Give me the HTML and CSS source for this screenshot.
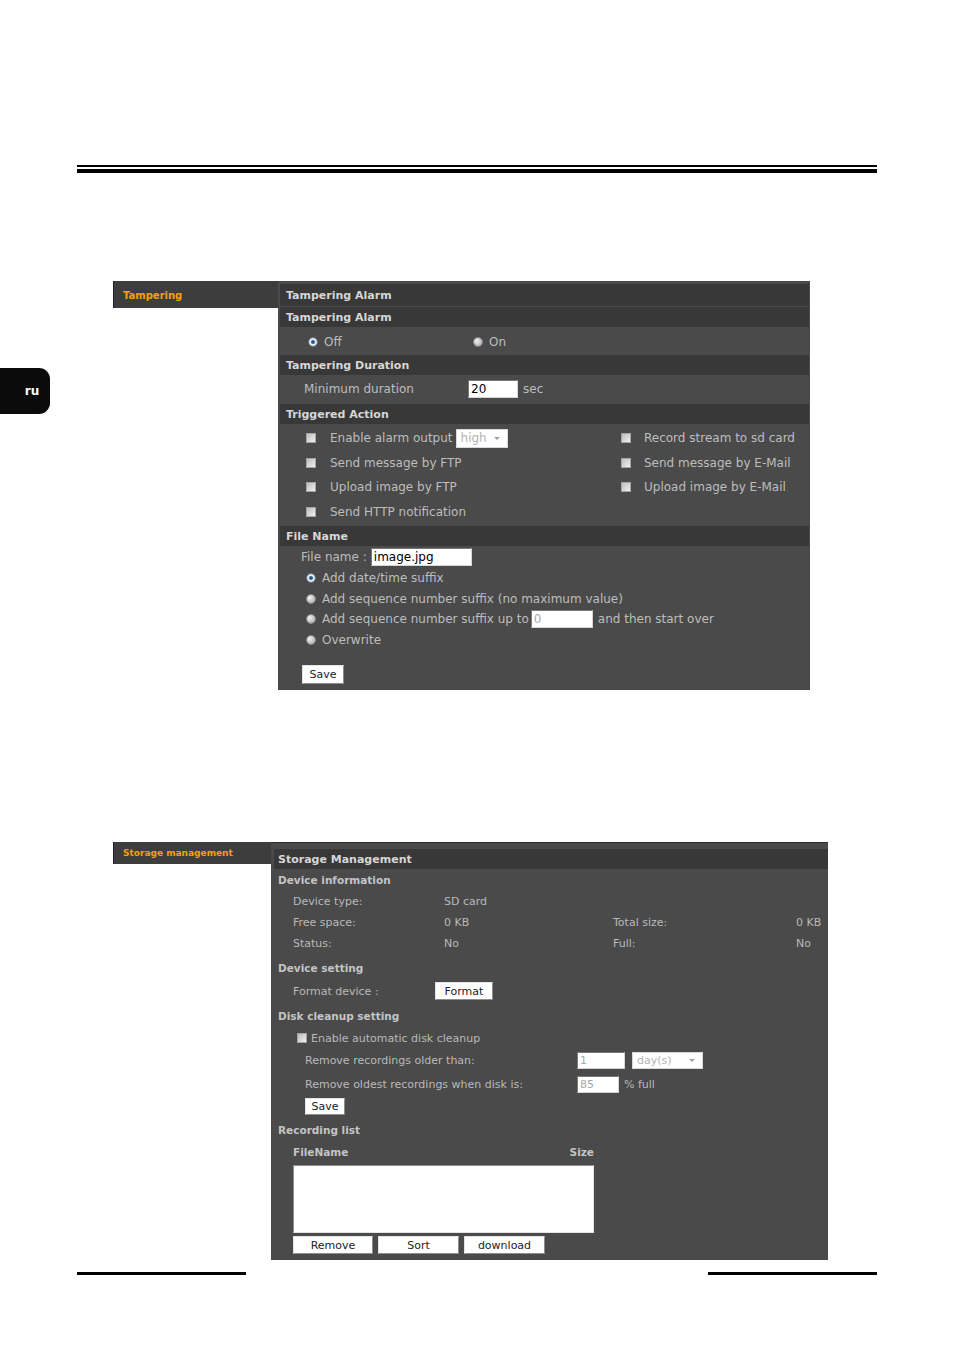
FILE: index.html
```html
<!DOCTYPE html>
<html lang="en">
<head>
    <meta charset="UTF-8">
    <meta name="viewport" content="width=device-width, initial-scale=1.0">
    <title>Tampering / Storage management</title>
    <link rel="stylesheet" href="styles.css">
</head>
<body>
<div class="page">
    <div class="rule-top">
        <div class="rule-thin"></div>
        <div class="rule-thick"></div>
    </div>

    <div class="lang-tab">ru</div>

    <!-- Tampering settings -->
    <div class="screen screen-tamper">
        <div class="side-nav"><span>Tampering</span></div>
        <div class="panel">
            <div class="panel-title">Tampering Alarm</div>

            <div class="sec-head">Tampering Alarm</div>
            <div class="row row-radio">
                <label class="opt opt-off"><input type="radio" name="alarm" checked>Off</label>
                <label class="opt"><input type="radio" name="alarm">On</label>
            </div>

            <div class="sec-head">Tampering Duration</div>
            <div class="row row-duration">
                <span class="lbl">Minimum duration</span>
                <input type="text" class="txt txt-dur" value="20">
                <span class="unit">sec</span>
            </div>

            <div class="sec-head">Triggered Action</div>
            <div class="actions">
                <label class="check"><input type="checkbox">Enable alarm output<span class="select sel-high">high<i class="caret"></i></span></label>
                <label class="check"><input type="checkbox">Record stream to sd card</label>
                <label class="check"><input type="checkbox">Send message by FTP</label>
                <label class="check"><input type="checkbox">Send message by E-Mail</label>
                <label class="check"><input type="checkbox">Upload image by FTP</label>
                <label class="check"><input type="checkbox">Upload image by E-Mail</label>
                <label class="check"><input type="checkbox">Send HTTP notification</label>
            </div>

            <div class="sec-head">File Name</div>
            <div class="file-body">
                <div class="row row-fname">
                    <span>File name :</span>
                    <input type="text" class="txt txt-fname" value="image.jpg">
                </div>
                <div class="suffixes">
                    <label class="opt"><input type="radio" name="suffix" checked>Add date/time suffix</label>
                    <label class="opt"><input type="radio" name="suffix">Add sequence number suffix (no maximum value)</label>
                    <label class="opt"><input type="radio" name="suffix">Add sequence number suffix up to<input type="text" class="txt txt-seq off" value="0"><span class="after">and then start over</span></label>
                    <label class="opt"><input type="radio" name="suffix">Overwrite</label>
                </div>
                <button class="btn btn-save">Save</button>
            </div>
        </div>
    </div>

    <!-- Storage settings -->
    <div class="screen screen-storage">
        <div class="side-nav side-nav-sm"><span>Storage management</span></div>
        <div class="panel panel-storage">
            <div class="panel-title">Storage Management</div>

            <div class="sub-head">Device information</div>
            <div class="info-grid">
                <span>Device type:</span><span>SD card</span><span></span><span></span>
                <span>Free space:</span><span>0 KB</span><span>Total size:</span><span>0 KB</span>
                <span>Status:</span><span>No</span><span>Full:</span><span>No</span>
            </div>

            <div class="sub-head gap">Device setting</div>
            <div class="srow srow-format">
                <span class="lbl">Format device :</span>
                <button class="btn btn-format">Format</button>
            </div>

            <div class="sub-head gap">Disk cleanup setting</div>
            <label class="srow srow-check"><input type="checkbox">Enable automatic disk cleanup</label>
            <div class="srow srow-clean">
                <span class="lbl">Remove recordings older than:</span>
                <input type="text" class="txt txt-days off" value="1">
                <span class="select sel-days">day(s)<i class="caret"></i></span>
            </div>
            <div class="srow srow-clean srow-full">
                <span class="lbl">Remove oldest recordings when disk is:</span>
                <input type="text" class="txt txt-pct off" value="85">
                <span class="unit">% full</span>
            </div>
            <button class="btn btn-save-sm">Save</button>

            <div class="sub-head list-gap">Recording list</div>
            <div class="list-head">
                <span>FileName</span>
                <span>Size</span>
            </div>
            <div class="listbox"></div>
            <div class="list-btns">
                <button class="btn btn-list">Remove</button>
                <button class="btn btn-list">Sort</button>
                <button class="btn btn-list">download</button>
            </div>
        </div>
    </div>

    <div class="rule-bottom">
        <div class="rule-seg"></div>
        <div class="rule-seg"></div>
    </div>
</div>
</body>
</html>
```

FILE: styles.css
```css
* {
    box-sizing: border-box;
}
body {
    margin: 0;
    background-color: #fff;
    font-family: "DejaVu Sans", Verdana, sans-serif;
}
.page {
    position: relative;
    width: 954px;
    height: 1350px;
    padding-top: 165px;
    overflow: hidden;
}

/* page rules */
.rule-top {
    margin: 0 77px;
}
.rule-thin {
    height: 2px;
    background-color: #000;
}
.rule-thick {
    height: 4px;
    margin-top: 2px;
    background-color: #000;
}
.rule-bottom {
    display: flex;
    justify-content: space-between;
    margin: 12px 77px 0;
}
.rule-seg {
    width: 169px;
    height: 3px;
    background-color: #000;
}

.lang-tab {
    position: absolute;
    left: 0;
    top: 368px;
    width: 50px;
    height: 46px;
    padding-left: 14px;
    display: flex;
    align-items: center;
    justify-content: center;
    background-color: #0b0b0b;
    border-radius: 0 11px 11px 0;
    color: #fff;
    font-weight: bold;
    font-size: 12px;
}

/* screens */
.screen {
    display: flex;
    align-items: flex-start;
    margin-left: 113px;
}
.screen-tamper {
    margin-top: 108px;
}
.screen-storage {
    margin-top: 152px;
}
.side-nav {
    width: 165px;
    height: 27px;
    padding: 2px 0 0 9px;
    background-color: #3d3d3d;
    border-left: 1px solid #1c1f45;
    color: #f5a00f;
    font-weight: bold;
    font-size: 10px;
    line-height: 26px;
}
.side-nav-sm {
    width: 158px;
    height: 22px;
    padding-top: 0;
    font-size: 9px;
    line-height: 23px;
}

.panel {
    width: 532px;
    padding: 3px 1px 6px 2px;
    background-color: #4a4a4a;
    color: #bdbdbd;
    font-size: 12px;
}
.panel-title, .sec-head {
    height: 22px;
    padding-left: 6px;
    background-color: #383838;
    color: #d6d6d6;
    font-weight: bold;
    font-size: 11px;
    line-height: 23px;
}
.sec-head {
    height: 20px;
    margin-top: 1px;
    line-height: 21px;
}

.row {
    display: flex;
    align-items: center;
}
.row-radio {
    height: 27px;
    padding: 2px 0 0 28px;
}
.opt {
    display: flex;
    align-items: center;
}
.opt-off {
    width: 165px;
}
.row-duration {
    height: 28px;
    padding-left: 24px;
}
.row-duration .lbl {
    width: 164px;
}
.unit {
    margin-left: 5px;
}

/* form controls */
input[type="radio"] {
    -webkit-appearance: none;
    appearance: none;
    width: 10px;
    height: 10px;
    margin: 0 6px 0 0;
    border-radius: 50%;
    border: 1px solid #8a8a8a;
    background: radial-gradient(circle at 35% 35%, #f4f4f4, #b5b5b5 70%);
    flex: none;
}
input[type="radio"]:checked {
    border-color: #6f7c88;
    background: #245f9a;
    box-shadow: inset 0 0 0 2px #ececec;
}
input[type="checkbox"] {
    -webkit-appearance: none;
    appearance: none;
    width: 10px;
    height: 10px;
    margin: 0 14px 0 0;
    border: 1px solid #a4a4a4;
    background: linear-gradient(135deg, #bdbdbd, #f0f0f0);
    flex: none;
}
.txt {
    height: 18px;
    padding: 0 2px;
    border: 1px solid;
    border-color: #7a7a7a #d4d4d4 #d4d4d4 #7a7a7a;
    background-color: #fff;
    color: #000;
    font-family: "DejaVu Sans", Verdana, sans-serif;
    font-size: 12px;
}
.txt.off {
    color: #a8a8a8;
}
.txt-dur {
    width: 50px;
}
.select {
    position: relative;
    display: inline-block;
    height: 19px;
    padding-left: 4px;
    background-color: #fff;
    border: 1px solid #d8d8d8;
    color: #b4b4b4;
    line-height: 17px;
}
.caret {
    position: absolute;
    right: 7px;
    top: 7px;
    border: 3px solid transparent;
    border-top: 3px solid #a0a0a0;
}
.btn {
    height: 19px;
    padding: 0;
    background-color: #fff;
    border: 1px solid;
    border-color: #e4e4e4 #8c8c8c #8c8c8c #e4e4e4;
    color: #222;
    font-family: "DejaVu Sans", Verdana, sans-serif;
    font-size: 11px;
}

/* triggered actions */
.actions {
    display: grid;
    grid-template-columns: 315px 1fr;
    grid-auto-rows: 24.5px;
    align-items: center;
    padding: 2px 0 1px 26px;
}
.check {
    display: flex;
    align-items: center;
}
.actions .check:nth-child(even) input {
    margin-right: 13px;
}
.sel-high {
    width: 52px;
    margin-left: 3px;
}

/* file name */
.row-fname {
    height: 21px;
    padding-left: 21px;
}
.txt-fname {
    width: 101px;
    margin-left: 4px;
}
.suffixes {
    margin-top: 1px;
    padding-left: 26px;
}
.suffixes .opt {
    height: 20.5px;
}
.txt-seq {
    width: 62px;
    margin-left: 2px;
}
.after {
    margin-left: 5px;
}
.btn-save {
    display: block;
    width: 42px;
    margin: 15px 0 0 22px;
}

/* storage */
.panel-storage {
    width: 557px;
    padding: 6px 0 6px 3px;
    border-top: 1px solid #2c2c2c;
    color: #b9b9b9;
    font-size: 11px;
}
.panel-storage .panel-title {
    height: 20px;
    padding-left: 4px;
    line-height: 21px;
}
.sub-head {
    height: 21px;
    padding-left: 4px;
    color: #c4c4c4;
    font-weight: bold;
    font-size: 10.5px;
    line-height: 22px;
}
.sub-head.gap {
    margin-top: 3px;
}
.sub-head.list-gap {
    height: 22px;
    margin-top: 4px;
    line-height: 22px;
}
.info-grid {
    display: grid;
    grid-template-columns: 151px 169px 183px 1fr;
    grid-auto-rows: 21px;
    align-items: center;
    padding-top: 1px;
    padding-left: 19px;
}
.srow {
    display: flex;
    align-items: center;
    height: 22px;
}
.srow-format {
    margin-top: 2px;
    padding-left: 19px;
}
.srow-format .lbl {
    width: 142px;
}
.btn-format {
    width: 58px;
    height: 18px;
}
.srow-check {
    margin-top: 1px;
    padding-left: 23px;
}
.srow-check input {
    margin-right: 4px;
}
.srow-clean {
    padding-left: 31px;
}
.srow-clean .lbl {
    width: 272px;
}
.srow-full {
    margin-top: 2px;
}
.srow .txt {
    height: 17px;
    font-size: 11px;
}
.txt-days {
    width: 48px;
}
.sel-days {
    width: 71px;
    height: 17px;
    margin-left: 7px;
    line-height: 15px;
}
.sel-days .caret {
    top: 6px;
}
.txt-pct {
    width: 42px;
}
.btn-save-sm {
    display: block;
    width: 40px;
    height: 17px;
    margin: 3px 0 0 31px;
}
.list-head {
    display: flex;
    justify-content: space-between;
    width: 320px;
    height: 22px;
    padding-left: 19px;
    color: #c4c4c4;
    font-weight: bold;
    font-size: 10.5px;
    line-height: 23px;
}
.listbox {
    width: 301px;
    height: 68px;
    margin: 2px 0 0 19px;
    background-color: #fff;
    border: 1px solid;
    border-color: #8c8c8c #e4e4e4 #e4e4e4 #8c8c8c;
}
.list-btns {
    display: flex;
    gap: 5px;
    margin: 3px 0 0 19px;
}
.btn-list {
    width: 81px;
    height: 18px;
}
.btn-list:first-child {
    width: 80px;
}
```
